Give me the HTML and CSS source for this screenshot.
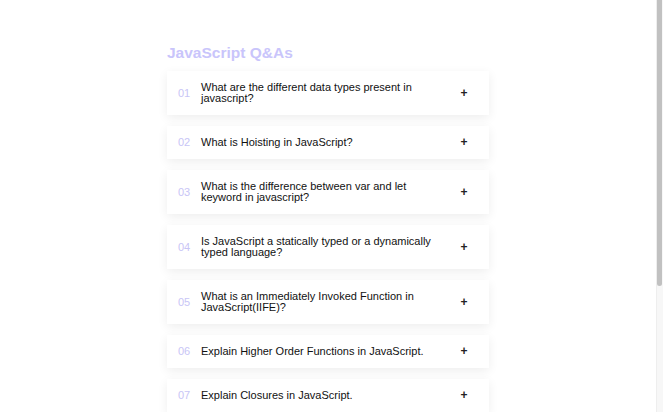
FILE: index.html
```html
<!DOCTYPE html>
<html lang="en">
<head>
<meta charset="utf-8">
<title>JavaScript Q&amp;As</title>
<link rel="stylesheet" href="styles.css">
</head>
<body>
<main class="faq">
  <h1 class="faq-title">JavaScript Q&amp;As</h1>
  <ul class="faq-list">
    <li class="faq-item"><span class="faq-num">01</span><span class="faq-q">What are the different data types present in javascript?</span><span class="faq-plus">+</span></li>
    <li class="faq-item"><span class="faq-num">02</span><span class="faq-q">What is Hoisting in JavaScript?</span><span class="faq-plus">+</span></li>
    <li class="faq-item"><span class="faq-num">03</span><span class="faq-q">What is the difference between var and let keyword in javascript?</span><span class="faq-plus">+</span></li>
    <li class="faq-item"><span class="faq-num">04</span><span class="faq-q">Is JavaScript a statically typed or a dynamically typed language?</span><span class="faq-plus">+</span></li>
    <li class="faq-item"><span class="faq-num">05</span><span class="faq-q">What is an Immediately Invoked Function in JavaScript(IIFE)?</span><span class="faq-plus">+</span></li>
    <li class="faq-item"><span class="faq-num">06</span><span class="faq-q">Explain Higher Order Functions in JavaScript.</span><span class="faq-plus">+</span></li>
    <li class="faq-item"><span class="faq-num">07</span><span class="faq-q">Explain Closures in JavaScript.</span><span class="faq-plus">+</span></li>
  </ul>
</main>
<div class="scrollbar" aria-hidden="true"><div class="scrollbar-thumb"></div></div>
</body>
</html>
```
FILE: styles.css
```css
html, body {
  margin: 0;
  padding: 0;
  background: #ffffff;
}
body {
  padding-right: 7px;
  font-family: "Liberation Sans", Arial, Helvetica, sans-serif;
  color: #111111;
}
.faq {
  max-width: 322px;
  margin: 0 auto;
  padding: 44px 0 0;
}
.faq-title {
  margin: 0 0 9px;
  font-size: 15.5px;
  line-height: 18px;
  font-weight: 700;
  color: #c9c5fb;
}
.faq-list {
  list-style: none;
  margin: 0;
  padding: 0;
  display: flex;
  flex-direction: column;
  gap: 11px;
}
.faq-item {
  display: flex;
  align-items: center;
  background: #ffffff;
  padding: 11px 0 11px 11px;
  box-shadow: 0 3px 10px rgba(0, 0, 0, 0.07);
  font-size: 11px;
  line-height: 11px;
}
.faq-num {
  width: 23px;
  flex: none;
  color: #c8c5f6;
}
.faq-q {
  flex: 1;
  color: #111111;
}
.faq-plus {
  flex: none;
  width: 8px;
  margin: 0 21px 0 16px;
  text-align: center;
  font-size: 12px;
  font-weight: 700;
  color: #222222;
}
.scrollbar {
  position: fixed;
  top: 0;
  right: 0;
  bottom: 0;
  width: 7px;
  background: #f7f7f7;
  border-left: 1px solid #eeeeee;
  box-sizing: border-box;
}
.scrollbar-thumb {
  width: 5px;
  height: 286px;
  background: #c1c1c1;
  border-radius: 0 0 3px 3px;
}
```
